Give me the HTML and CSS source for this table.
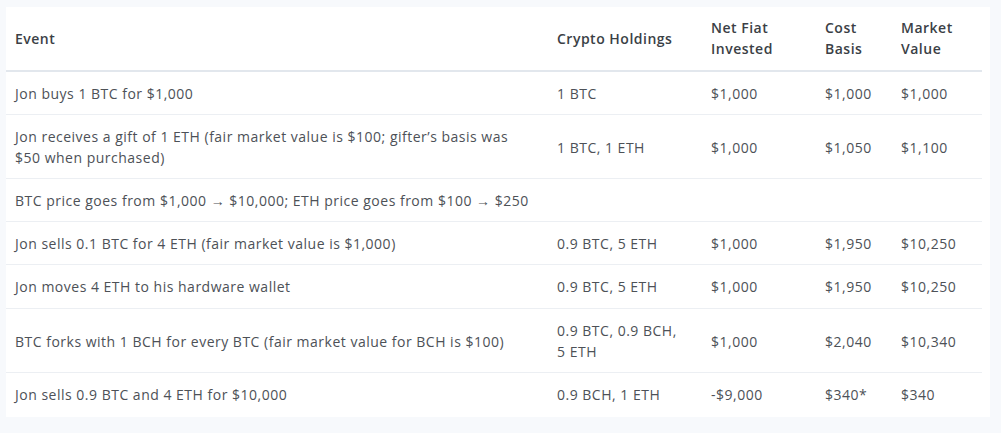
FILE: index.html
```html
<!DOCTYPE html>
<html lang="en">
<head>
<meta charset="utf-8">
<title>Cost basis example</title>
<link rel="stylesheet" href="styles.css">
</head>
<body>
<div class="panel">
  <table class="ledger">
    <colgroup>
      <col class="c-event">
      <col class="c-hold">
      <col class="c-fiat">
      <col class="c-cost">
      <col class="c-mkt">
    </colgroup>
    <thead>
      <tr>
        <th>Event</th>
        <th>Crypto Holdings</th>
        <th>Net Fiat<br>Invested</th>
        <th>Cost<br>Basis</th>
        <th>Market<br>Value</th>
      </tr>
    </thead>
    <tbody>
      <tr>
        <td>Jon buys 1 BTC for $1,000</td>
        <td>1 BTC</td>
        <td>$1,000</td>
        <td>$1,000</td>
        <td>$1,000</td>
      </tr>
      <tr>
        <td>Jon receives a gift of 1 ETH (fair market value is $100; gifter’s basis was<br>$50 when purchased)</td>
        <td>1 BTC, 1 ETH</td>
        <td>$1,000</td>
        <td>$1,050</td>
        <td>$1,100</td>
      </tr>
      <tr>
        <td>BTC price goes from $1,000 → $10,000; ETH price goes from $100 → $250</td>
        <td></td>
        <td></td>
        <td></td>
        <td></td>
      </tr>
      <tr>
        <td>Jon sells 0.1 BTC for 4 ETH (fair market value is $1,000)</td>
        <td>0.9 BTC, 5 ETH</td>
        <td>$1,000</td>
        <td>$1,950</td>
        <td>$10,250</td>
      </tr>
      <tr class="tall">
        <td>Jon moves 4 ETH to his hardware wallet</td>
        <td>0.9 BTC, 5 ETH</td>
        <td>$1,000</td>
        <td>$1,950</td>
        <td>$10,250</td>
      </tr>
      <tr>
        <td>BTC forks with 1 BCH for every BTC (fair market value for BCH is $100)</td>
        <td>0.9 BTC, 0.9 BCH,<br>5 ETH</td>
        <td>$1,000</td>
        <td>$2,040</td>
        <td>$10,340</td>
      </tr>
      <tr>
        <td>Jon sells 0.9 BTC and 4 ETH for $10,000</td>
        <td>0.9 BCH, 1 ETH</td>
        <td>-$9,000</td>
        <td>$340*</td>
        <td>$340</td>
      </tr>
    </tbody>
  </table>
</div>
</body>
</html>
```
FILE: styles.css
```css
html, body {
  margin: 0;
  padding: 0;
  background: #f7f9fc;
}
body {
  padding: 7px 11px 0 6px;
  font-family: "Open Sans", "Liberation Sans", sans-serif;
  font-size: 14px;
  letter-spacing: 0.5px;
  color: #4d5157;
}
.panel {
  background: #ffffff;
  width: 984px;
  height: 410px;
  box-sizing: border-box;
  padding-right: 8px;
}
.ledger {
  width: 976px;
  border-collapse: collapse;
  table-layout: fixed;
}
.c-event { width: 542px; }
.c-hold { width: 154px; }
.c-fiat { width: 114px; }
.c-cost { width: 76px; }
.c-mkt { width: 90px; }
.ledger th {
  text-align: left;
  font-weight: 600;
  color: #3b3f46;
  line-height: 21px;
  padding: 10px 9px 11px 9px;
  height: 42px;
  vertical-align: middle;
  border-bottom: 2px solid #e2e7ed;
  white-space: nowrap;
}
.ledger td {
  line-height: 21px;
  padding: 11px 9px 10px 9px;
  vertical-align: middle;
  border-bottom: 1px solid #eceff3;
  white-space: nowrap;
}
.ledger tr.tall td {
  padding-bottom: 11px;
}
.ledger tbody tr:last-child td {
  border-bottom: none;
  padding-bottom: 12px;
}
```
